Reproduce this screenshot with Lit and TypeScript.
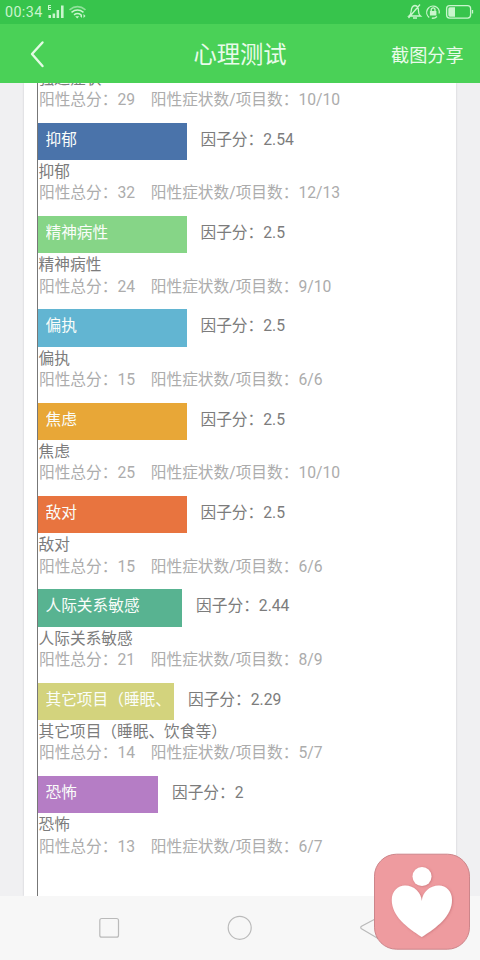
import { LitElement, html, css, nothing } from "lit";
import { customElement, property } from "lit/decorators.js";

interface Bar {
  score: string;
  color: string;
  width: number;
}

interface Factor {
  name: string;
  total: number;
  ratio: string;
  bar?: Bar;
}

const FACTORS: Factor[] = [
  { name: "强迫症状", total: 29, ratio: "10/10" },
  { name: "抑郁", total: 32, ratio: "12/13", bar: { score: "2.54", color: "#4a73aa", width: 148.7 } },
  { name: "精神病性", total: 24, ratio: "9/10", bar: { score: "2.5", color: "#86d587", width: 148.7 } },
  { name: "偏执", total: 15, ratio: "6/6", bar: { score: "2.5", color: "#62b5d2", width: 148.7 } },
  { name: "焦虑", total: 25, ratio: "10/10", bar: { score: "2.5", color: "#e8a737", width: 148.7 } },
  { name: "敌对", total: 15, ratio: "6/6", bar: { score: "2.5", color: "#e8743f", width: 148.7 } },
  { name: "人际关系敏感", total: 21, ratio: "8/9", bar: { score: "2.44", color: "#58b391", width: 144.3 } },
  { name: "其它项目（睡眠、饮食等）", total: 14, ratio: "5/7", bar: { score: "2.29", color: "#d3d37d", width: 136.2 } },
  { name: "恐怖", total: 13, ratio: "6/7", bar: { score: "2", color: "#b57dc5", width: 120.2 } },
];

@customElement("factor-row")
export class FactorRow extends LitElement {
  @property({ attribute: false }) factor!: Factor;

  static styles = css`
    :host { display: block; padding-bottom: 13.16px; white-space: nowrap; }
    .line { display: flex; gap: 13.8px; height: 37.4px; }
    .bar {
      box-sizing: border-box; height: 37.4px; padding: 0 2px 0 7.5px;
      line-height: 34.4px; overflow: hidden; color: #fafdfa;
    }
    .label { display: block; height: 34.4px; overflow: hidden; white-space: normal; word-break: break-all; }
    .score { color: #7c7c7c; line-height: 34.4px; }
    .name { color: #7c7c7c; height: 21.4px; line-height: 23px; padding-left: .6px; }
    .meta { color: #acacac; height: 21.4px; line-height: 23.4px; padding-left: 1px; white-space: pre; }
  `;

  render() {
    const f = this.factor;
    return html`
      ${f.bar
        ? html`<div class="line">
            <div class="bar" style="width:${f.bar.width}px;background:${f.bar.color}"><span class="label">${f.name}</span></div>
            <div class="score">因子分：${f.bar.score}</div>
          </div>`
        : nothing}
      <div class="name">${f.name}</div>
      <div class="meta">${`阳性总分：${f.total}\u3000阳性症状数/项目数：${f.ratio}`}</div>
    `;
  }
}

@customElement("app-root")
export class AppRoot extends LitElement {
  static styles = css`
    :host {
      display: flex; flex-direction: column; position: relative;
      width: 480px; height: 960px; overflow: hidden; background: #f0f0f2;
      font-family: Roboto, "Noto Sans CJK SC", sans-serif; font-size: 15.7px;
    }
    svg { display: block; flex: none; }
    .status {
      height: 24px; flex: none; box-sizing: border-box; padding: 0 6px 0 5px; background: #37c44c;
      display: flex; align-items: center; color: #c9f5cd; font-size: 14.3px; letter-spacing: .4px;
    }
    .time { width: 42px; line-height: 26px; }
    .spacer { flex: 1; }
    .header {
      height: 59.3px; flex: none; background: #4ad157; color: #e9fbea;
      display: grid; grid-template-columns: 120px 1fr 120px; align-items: center;
    }
    .back { margin-left: 29px; }
    .title { text-align: center; font-size: 23.3px; line-height: 63px; height: 59.3px; }
    .share { text-align: right; padding-right: 16.5px; font-size: 18.1px; line-height: 63px; height: 59.3px; }
    .content { flex: 1; min-height: 0; overflow: hidden; }
    .card {
      box-sizing: border-box; height: 100%; margin: 0 24px; padding-left: 13px;
      background: #fff; box-shadow: 0 0 2px #c8c8cc; overflow: hidden;
    }
    .chart { border-left: 1px solid #777; height: 850px; margin-top: -16.6px; }
    .nav { height: 64px; flex: none; background: #f7f7f7; }
    .float { position: absolute; left: 370px; top: 850px; }
  `;

  render() {
    return html`
      <div class="status">
        <span class="time">00:34</span>
        <svg width="42" height="24" viewBox="0 0 42 24" fill="#c9f5cd">
          <path d="M1 5h3v1H2v1h2v1H2v1h2v1H1zM1.500 15H4v3H1.500zM5.600 13.500h2.500V18H5.600zM9.600 10h2.500v8H9.600zM14 5.500h2.600V18H14z"/>
          <g fill="none" stroke="#c9f5cd" stroke-width="1.600">
            <path d="M22.500 9.800q8-6.500 16 0" opacity=".6"/><path d="M24.500 12.300q6-4.500 12 0M27 14.800q3.500-2.500 7 0"/>
          </g>
          <path d="M28.200 16.300h4L30.200 18.600zM33 16l2-2v4zM36.500 14l2 2-2 2z"/>
        </svg>
        <span class="spacer"></span>
        <svg width="68" height="24" viewBox="0 0 68 24" fill="none" stroke="#c9f5cd" stroke-width="1.300">
          <path d="M3 16h11.500q-2-1.500-2-5Q12.500 6 9 5.500 5.500 6 5.200 11 5 14.500 3 16zM7 18h4M2.500 18 14 4.500"/>
          <path d="M23.200 17.400A6.300 6.300 0 1 1 33.200 13.500M31 16.500A6.300 6.300 0 0 1 25.800 18.200"/>
          <path d="M25.200 11V9.800a1.900 1.900 0 0 1 3.800 0V11"/>
          <path d="M23.900 11h6.500v4.500h-6.500z" fill="#c9f5cd" stroke="none"/>
          <rect x="40.600" y="5.600" width="24" height="12.500" rx="3"/>
          <path d="M44 7.200h5v9.600h-5q-1.700 0-1.700-1.700V9q0-1.800 1.700-1.800z" fill="#c9f5cd" stroke="none"/>
          <path d="M66.500 10v3.500"/>
        </svg>
      </div>
      <div class="header">
        <svg class="back" width="18" height="30" viewBox="0 0 18 30" fill="none" stroke="#e4fbe5" stroke-width="2.400" stroke-linecap="round" stroke-linejoin="round">
          <path d="M13.500 3.500 3 15l10.500 12"/>
        </svg>
        <div class="title">心理测试</div>
        <div class="share">截图分享</div>
      </div>
      <div class="content">
        <div class="card">
          <div class="chart">${FACTORS.map((f) => html`<factor-row .factor=${f}></factor-row>`)}</div>
        </div>
      </div>
      <div class="nav">
        <svg width="480" height="64" viewBox="0 0 480 64" fill="none" stroke="#bababa" stroke-width="1.200">
          <rect x="99.800" y="22.500" width="18.700" height="18.700" rx="2"/>
          <circle cx="239.700" cy="31.800" r="11.500"/>
          <path d="M378 21.500 361.500 30.200q-1.500 1.300 0 2.600L378 42.500z"/>
        </svg>
      </div>
      <svg class="float" width="106" height="106" viewBox="0 0 106 106">
        <defs>
          <filter id="soft" x="-20%" y="-20%" width="140%" height="140%">
            <feDropShadow dx=".7" dy=".5" stdDeviation=".8" flood-color="#a84e56" flood-opacity=".5"/>
          </filter>
        </defs>
        <rect x="4.500" y="4.200" width="95" height="95" rx="22" fill="#ee9b9f" stroke="#cc858a" stroke-width="1"/>
        <g fill="#fff" filter="url(#soft)">
          <circle cx="52" cy="26.500" r="9.500"/>
          <path d="M51.800 87C37 77.500 21.800 66 21.800 50C21.800 41 28 35.500 35 35.500C44 35.500 51 42 51.800 51C52.600 42 59.600 35.500 69 35.500C76 35.500 82 41 82 50C82 66 67 77.500 51.800 87Z"/>
        </g>
      </svg>
    `;
  }
}
